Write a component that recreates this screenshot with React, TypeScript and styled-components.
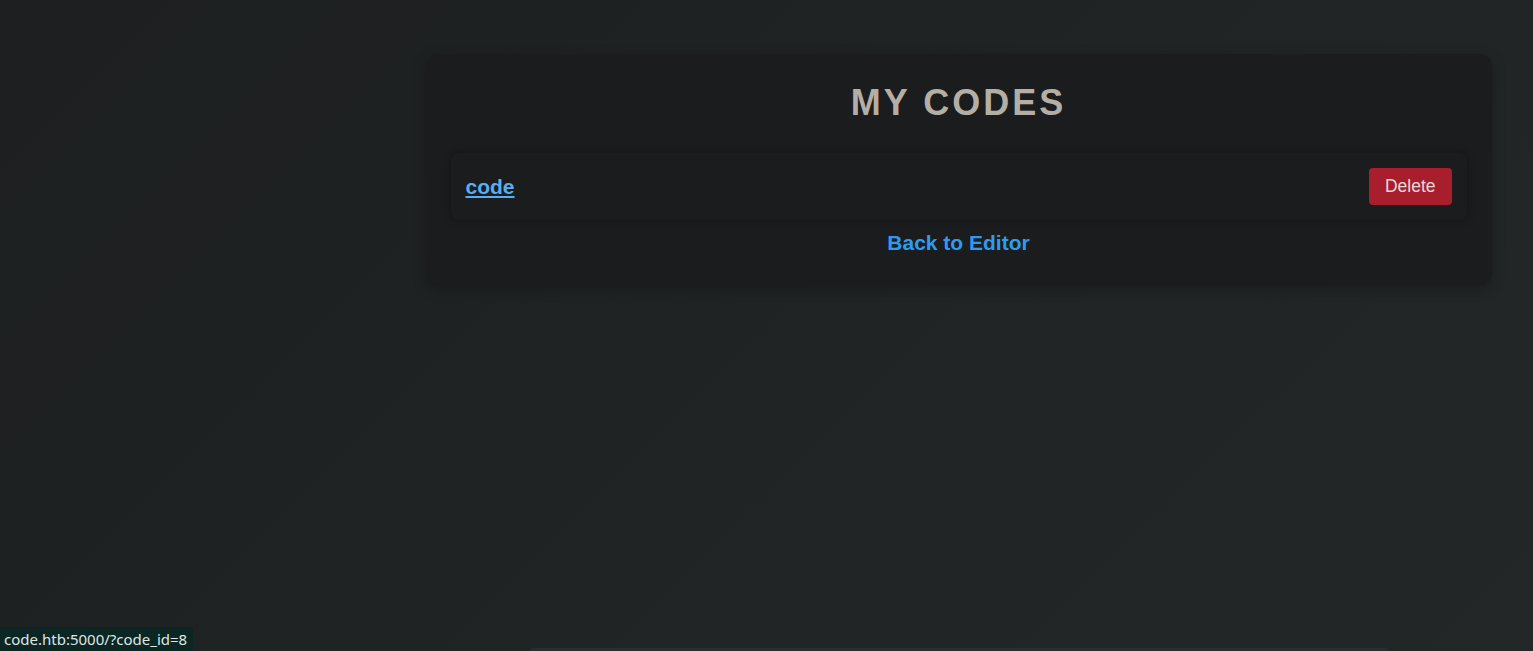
import React from 'react';
import styled, { createGlobalStyle } from 'styled-components';

const GlobalStyle = createGlobalStyle`
  html, body {
    margin: 0;
    padding: 0;
    height: 100%;
  }
  body {
    background: linear-gradient(135deg, #1d1f20 0%, #202425 55%, #232728 100%);
    font-family: "Liberation Sans", Arial, sans-serif;
    overflow: hidden;
  }
  #root {
    min-height: 100vh;
  }
`;

const Page = styled.div`
  height: 651px;
  display: flex;
  flex-direction: column;
  align-items: center;
  padding: 54px 0 0 384px;
  box-sizing: border-box;
`;

const Card = styled.section`
  width: 1066px;
  box-sizing: border-box;
  background: #1b1c1e;
  border-radius: 12px;
  padding: 28px 25px 30px;
  box-shadow: 0 4px 14px rgba(0, 0, 0, 0.25);
  display: flex;
  flex-direction: column;
  align-items: stretch;
`;

const Title = styled.h1`
  margin: 0 0 29px;
  text-align: center;
  font-size: 36px;
  font-weight: 700;
  letter-spacing: 3px;
  color: #b5aea4;
  line-height: normal;
`;

const List = styled.ul`
  list-style: none;
  margin: 0 0 11px;
  padding: 0;
`;

const Row = styled.li`
  display: flex;
  align-items: center;
  justify-content: space-between;
  padding: 15px;
  background: #1b1c1e;
  border-radius: 8px;
  box-shadow: 0 0 8px rgba(0, 0, 0, 0.28);
`;

const CodeLink = styled.a`
  color: #5aadf0;
  font-size: 21px;
  font-weight: 700;
  text-decoration: underline;
  cursor: pointer;
`;

const DeleteButton = styled.button`
  height: 37px;
  padding: 0 16px;
  border: none;
  border-radius: 4px;
  background: #a91e2c;
  color: #e3d9d9;
  font-family: "Liberation Sans", Arial, sans-serif;
  font-size: 17.5px;
  cursor: pointer;
`;

const BackLink = styled.a`
  align-self: center;
  color: #2f9bef;
  font-size: 21px;
  font-weight: 700;
  text-decoration: none;
  cursor: pointer;
`;

const Spacer = styled.div`
  flex: 1;
`;

const EditorEdge = styled.div`
  width: 858px;
  height: 3px;
  background: #2a2d31;
  border-radius: 6px 6px 0 0;
`;

const StatusTip = styled.div`
  position: fixed;
  left: 0;
  bottom: 0;
  height: 24px;
  padding: 0 6px 0 4px;
  display: flex;
  align-items: center;
  background: #0c2624;
  color: #dfe6e6;
  font-family: "Noto Sans", "Open Sans", sans-serif;
  font-size: 15px;
  border-top-right-radius: 3px;
`;

const codes = [{ id: 8, name: 'code' }];

export default function App() {
  return (
    <>
      <GlobalStyle />
      <Page>
        <Card>
          <Title>MY CODES</Title>
          <List>
            {codes.map((c) => (
              <Row key={c.id}>
                <CodeLink href={`/?code_id=${c.id}`}>{c.name}</CodeLink>
                <DeleteButton>Delete</DeleteButton>
              </Row>
            ))}
          </List>
          <BackLink href="/">Back to Editor</BackLink>
        </Card>
        <Spacer />
        <EditorEdge />
      </Page>
      <StatusTip>code.htb:5000/?code_id=8</StatusTip>
    </>
  );
}
